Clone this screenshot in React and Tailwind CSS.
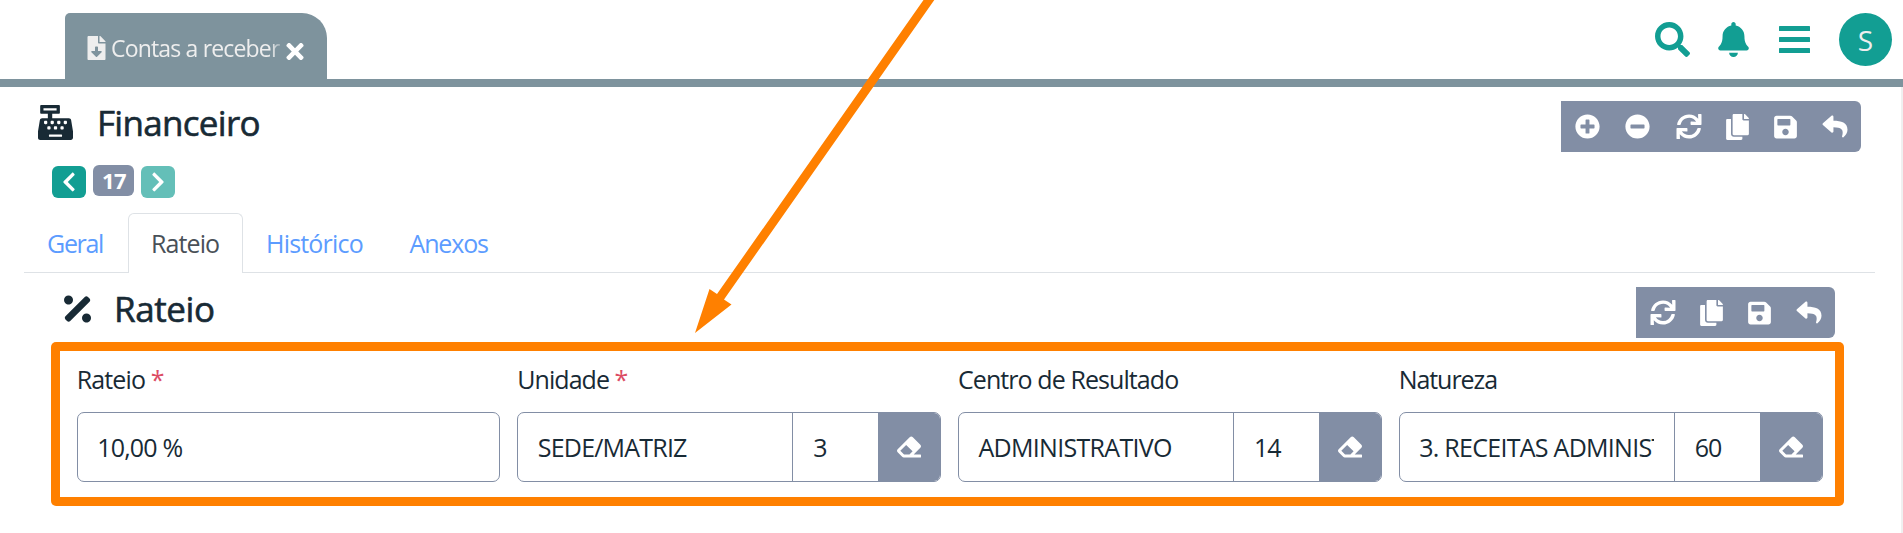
import {
  FaFileDownload, FaTimes, FaSearch, FaBell, FaCashRegister, FaChevronLeft, FaChevronRight,
  FaPlusCircle, FaMinusCircle, FaSync, FaCopy, FaSave, FaReply, FaEraser, FaPercentage,
} from "react-icons/fa";

function MenuIcon({ className }) {
  return (
    <svg className={className} viewBox="0 0 31 27" fill="currentColor">
      <rect width="31" height="5" rx="0.6" />
      <rect y="11" width="31" height="5" rx="0.6" />
      <rect y="22" width="31" height="5" rx="0.6" />
    </svg>
  );
}

function Toolbar({ children, className }) {
  return (
    <div className={`flex h-[51px] items-start rounded-r-md bg-[#828ea5] pt-[13px] pl-3.5 text-white ${className}`}>
      {children}
    </div>
  );
}

function Field({ label, required, value, code, labelTracking, valueTracking }) {
  return (
    <div className="flex w-[424px] flex-col">
      <label className={`h-10 leading-[37px] whitespace-nowrap ${labelTracking}`}>
        {label} {required && <span className="text-[#dc4c64]">*</span>}
      </label>
      <div
        className={`mt-[11px] flex h-[70px] overflow-hidden rounded-[7px] border border-[#828ea5] leading-[68px] ${code ? "" : "mr-[0.67px]"}`}
      >
        <div className="min-w-0 flex-1 pr-5 pl-[19.5px]">
          <div className={`overflow-hidden whitespace-nowrap ${valueTracking}`}>{value}</div>
        </div>
        {code && (
          <>
            <div className="w-[86px] border-l border-[#828ea5] pl-5 tracking-[-0.9px]">{code}</div>
            <button className="flex w-[62px] items-center justify-center bg-[#828ea5] text-white">
              <FaEraser className="size-6" />
            </button>
          </>
        )}
      </div>
    </div>
  );
}

export default function App() {
  return (
    <div className="relative h-[533px] w-[1903px] overflow-hidden bg-white font-['Open_Sans',sans-serif] text-[25px] text-[#182a35]">
      <header className="flex h-[87px] items-start justify-between border-b-8 border-[#7e939d] pt-[13px] pr-[11px] pl-[65px]">
        <div className="flex h-[66px] w-[262px] rounded-tl-[5px] rounded-tr-[25px] bg-[#7e939d] pl-[22px] text-[#eeeeee]">
          <FaFileDownload className="mt-[23px] h-6 w-[19px]" />
          <span className="ml-[5px] w-[170px] overflow-hidden mask-r-from-94% mask-r-to-102% text-[23px] leading-[70px] tracking-[-0.83px] whitespace-nowrap">
            Contas a receber
          </span>
          <FaTimes className="mt-[26px] ml-[3px] h-[25px] w-[22px] text-white" />
        </div>
        <div className="flex items-start text-[#129e93]">
          <FaSearch className="mt-[9px] size-[35px]" />
          <FaBell className="mt-[9px] ml-7 h-[35px] w-[31px]" />
          <MenuIcon className="mt-[13px] ml-[30px] h-[27px] w-[31px]" />
          <div className="ml-[29px] flex size-[53px] items-center justify-center rounded-full bg-[#129e93] text-[28px] text-[#eeeeee]">
            S
          </div>
        </div>
      </header>

      <main className="flex flex-col">
        <div className="flex h-[78px] items-start justify-between pr-[42px] pl-[38px]">
          <div className="flex items-start">
            <FaCashRegister className="mt-[18px] size-[35px]" />
            <h1 className="mt-3 ml-6 text-[35px] leading-[48px] font-medium tracking-[-0.7px] [-webkit-text-stroke:0.6px_currentColor]">
              Financeiro
            </h1>
          </div>
          <Toolbar className="mt-3.5 w-[300px]">
            <FaPlusCircle className="size-[25px]" />
            <FaMinusCircle className="ml-[25px] size-[25px]" />
            <FaSync className="ml-[26px] h-[25px] w-[26px]" />
            <FaCopy className="ml-6 h-[26px] w-[23px]" />
            <FaSave className="ml-[25px] h-[26px] w-[23px]" />
            <FaReply className="ml-[25px] h-[25px] w-[26px]" />
          </Toolbar>
        </div>

        <div className="flex h-12 items-start gap-[7px] pl-[52px] text-white">
          <button className="mt-px flex h-8 w-[34px] items-center justify-center rounded-md bg-[#129e93]">
            <FaChevronLeft className="size-[22px]" />
          </button>
          <span className="flex h-[31px] w-[41px] items-center justify-center rounded-md bg-[#828ea5] pl-px text-[22px] leading-[31px] font-bold tracking-[-0.7px]">
            17
          </span>
          <button className="mt-px flex h-8 w-[34px] items-center justify-center rounded-md bg-[#64bfb8]">
            <FaChevronRight className="size-[22px]" />
          </button>
        </div>

        <nav className="mr-7 ml-6 flex h-[60px] items-start border-b border-[#dee2e6] leading-[60px] text-[#5c9cff]">
          <a className="w-[104px] pl-[23px] tracking-[-1.3px]">Geral</a>
          <a className="h-[60px] w-[115px] rounded-t-md border border-b-0 border-[#dee2e6] bg-white pl-[22px] leading-[58px] tracking-[-0.9px] text-[#495057]">
            Rateio
          </a>
          <a className="w-[143px] pl-[23px] tracking-[-0.8px]">Histórico</a>
          <a className="pl-[23.5px] tracking-[-1.15px]">Anexos</a>
        </nav>

        <div className="flex h-[69px] items-start justify-between pr-[68px] pl-16">
          <div className="flex items-start">
            <FaPercentage className="mt-[18px] h-[36px] w-[27px]" />
            <h2 className="mt-3 ml-[23px] text-[35px] leading-[48px] font-medium tracking-[-0.4px] [-webkit-text-stroke:0.6px_currentColor]">
              Rateio
            </h2>
          </div>
          <Toolbar className="mt-3.5 w-[199px]">
            <FaSync className="h-[25px] w-[26px]" />
            <FaCopy className="ml-6 h-[26px] w-[23px]" />
            <FaSave className="ml-[25px] h-[26px] w-[23px]" />
            <FaReply className="ml-[25px] h-[25px] w-[26px]" />
          </Toolbar>
        </div>

        <section className="ml-[51px] h-[164px] w-[1793px] rounded-[5px] bg-[#ff8000] p-[9px]">
          <div className="flex h-full gap-[16.67px] bg-white pt-[10px] pl-[16.67px]">
            <Field label="Rateio" required value="10,00 %" labelTracking="tracking-[-0.85px]" valueTracking="tracking-[-0.8px]" />
            <Field label="Unidade" required value="SEDE/MATRIZ" code="3" labelTracking="tracking-[-0.95px]" valueTracking="tracking-[-0.8px]" />
            <Field label="Centro de Resultado" value="ADMINISTRATIVO" code="14" labelTracking="tracking-[-0.92px]" valueTracking="tracking-[-0.7px]" />
            <Field label="Natureza" value="3. RECEITAS ADMINISTRATIVAS" code="60" labelTracking="tracking-[-1.05px]" valueTracking="tracking-[-0.72px]" />
          </div>
        </section>
      </main>

      <div className="absolute top-[87px] right-0 h-[446px] w-0.5 bg-[#f0f0f0]" />
      <svg className="pointer-events-none absolute top-0 left-0" width="1903" height="533" fill="#ff8000">
        <path d="M923.5 0H934.3L724 299.5L731.5 304.5L695 333L709.5 289L717 294Z" />
      </svg>
    </div>
  );
}
